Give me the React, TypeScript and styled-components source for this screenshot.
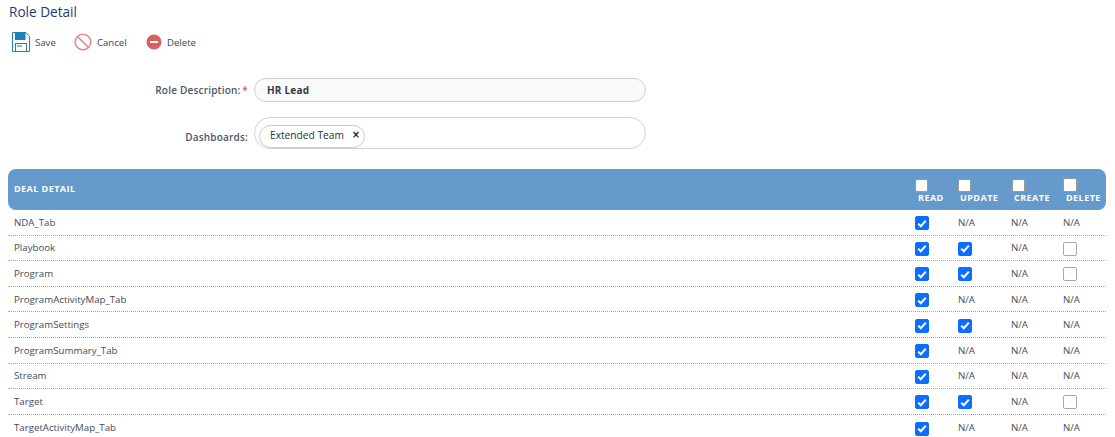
import React from 'react';
import styled, { createGlobalStyle } from 'styled-components';

const GlobalStyle = createGlobalStyle`
  html, body {
    margin: 0;
    padding: 0;
    background: #fff;
    font-family: "Open Sans", "Noto Sans", sans-serif;
  }
`;

const Page = styled.div`
  width: 1115px;
  height: 437px;
  overflow: hidden;
  padding: 3px 9px 0 8px;
  box-sizing: border-box;
`;

const Title = styled.h1`
  margin: 0 0 0 1px;
  font-size: 13.6px;
  line-height: 18px;
  font-weight: 400;
  color: #1c3a78;
`;

const Toolbar = styled.div`
  display: flex;
  align-items: center;
  height: 24px;
  margin: 9px 0 0 4px;
`;

const ToolButton = styled.div<{ $width: number }>`
  display: flex;
  align-items: center;
  gap: 5px;
  width: ${({ $width }) => $width}px;
  font-size: 9.6px;
  color: #2f4a66;
`;

const Form = styled.div`
  display: flex;
  flex-direction: column;
  margin-top: 24px;
`;

const FormRow = styled.div<{ $top: number }>`
  display: flex;
  align-items: center;
  margin-top: ${({ $top }) => $top}px;
`;

const Label = styled.label<{ $drop?: number }>`
  width: 240px;
  margin-right: 6px;
  padding-top: ${({ $drop }) => $drop ?? 0}px;
  text-align: right;
  font-size: 10px;
  font-weight: 600;
  letter-spacing: 0.2px;
  color: #4a5568;
`;

const Required = styled.span`
  margin-left: -1px;
  color: #e0545c;
`;

const TextInput = styled.div`
  width: 392px;
  height: 24px;
  box-sizing: border-box;
  padding-left: 12px;
  display: flex;
  align-items: center;
  border: 1px solid #cdcdd8;
  border-radius: 12px;
  background: #fafafa;
  font-size: 10px;
  font-weight: 700;
  letter-spacing: 0.2px;
  color: #333b4a;
`;

const TagInput = styled.div`
  width: 392px;
  height: 32px;
  box-sizing: border-box;
  padding: 4px;
  border: 1px solid #d2d2d8;
  border-radius: 16px;
  background: #fff;
`;

const Tag = styled.span`
  display: inline-flex;
  align-items: center;
  gap: 8px;
  height: 23px;
  box-sizing: border-box;
  padding: 0 4px 2px 10px;
  border: 1px solid #c9c9cf;
  border-radius: 12px;
  font-size: 10.2px;
  color: #2a2f3a;
`;

const TagClose = styled.span`
  margin-top: -2px;
  font-size: 10px;
  font-weight: 700;
  font-family: "DejaVu Sans", sans-serif;
  color: #222;
`;

const Table = styled.div`
  margin-top: 20px;
  width: 1098px;
`;

const grid = `
  display: grid;
  grid-template-columns: 907px 43px 53px 52px 43px;
`;

const HeaderRow = styled.div`
  ${grid}
  height: 41px;
  align-items: center;
  background: #6699cc;
  border-radius: 8px;
  color: #fff;
  font-size: 9px;
  font-weight: 700;
  letter-spacing: 0.45px;
`;

const HeaderTitle = styled.div`
  padding-left: 6px;
  margin-top: -3px;
`;

const HeaderCell = styled.div`
  display: flex;
  flex-direction: column;
  align-items: flex-start;
  align-self: start;
  padding-top: 10px;
  line-height: 10px;
`;

const HeaderBox = styled.span<{ $indent: number; $size: number }>`
  display: block;
  width: ${({ $size }) => $size}px;
  height: ${({ $size }) => $size}px;
  margin-left: ${({ $indent }) => $indent}px;
  margin-top: ${({ $size }) => 13 - $size}px;
  background: #fff;
  border: 1px solid #9a9a9a;
  border-radius: 2px;
  box-sizing: border-box;
`;

const HeaderText = styled.span<{ $indent: number }>`
  margin-top: 1px;
  margin-left: ${({ $indent }) => $indent}px;
`;

const Row = styled.div`
  ${grid}
  height: 25.6px;
  box-sizing: border-box;
  align-items: center;
  border-bottom: 1px dotted #a8a8a8;
  font-size: 9.7px;
  color: #444c58;
  &:last-child {
    border-bottom: none;
  }
`;

const RowName = styled.div`
  padding-left: 6px;
`;

const Cell = styled.div`
  display: flex;
  align-items: center;
`;

const Box = styled.span<{ $checked: boolean }>`
  display: flex;
  align-items: center;
  justify-content: center;
  width: 14px;
  height: 14px;
  margin-top: 2px;
  box-sizing: border-box;
  border-radius: 2px;
  border: 1px solid ${({ $checked }) => ($checked ? '#0d6efd' : '#a9a9a9')};
  background: ${({ $checked }) => ($checked ? '#0d6efd' : '#fff')};
`;

const SaveIcon = () => (
  <svg width="18" height="20" viewBox="0 0 18 20" fill="none">
    <path d="M.5.5h13.5l3.5 4v15H.5z" fill="#fff" stroke="#1f7fb8" />
    <rect x="3" y="1" width="10.5" height="7" fill="#1f7fb8" />
    <rect x="3.5" y="11.5" width="11" height="8" fill="#fff" stroke="#1f7fb8" />
    <rect x="5" y="13" width="5" height="2" fill="#8fb8d4" />
  </svg>
);

const CancelIcon = () => (
  <svg width="18" height="18" viewBox="0 0 18 18" fill="none">
    <circle cx="9" cy="9" r="7.8" stroke="#e08a8a" strokeWidth="1.6" />
    <path d="M3.5 3.5l11 11" stroke="#e08a8a" strokeWidth="1.6" />
  </svg>
);

const DeleteIcon = () => (
  <svg width="16" height="16" viewBox="0 0 16 16">
    <circle cx="8" cy="8" r="7.5" fill="#d9605f" />
    <rect x="4" y="7" width="8" height="2" fill="#fff" />
  </svg>
);

const CheckBox = ({ checked }: { checked: boolean }) => (
  <Box $checked={checked}>
    {checked && (
      <svg width="10" height="9" viewBox="0 0 10 9" fill="none">
        <path d="M1.2 4.6l2.6 2.6 5-5.6" stroke="#fff" strokeWidth="2" />
      </svg>
    )}
  </Box>
);

type Perm = 'on' | 'off' | 'na';

const rows: { name: string; perms: Perm[] }[] = [
  { name: 'NDA_Tab', perms: ['on', 'na', 'na', 'na'] },
  { name: 'Playbook', perms: ['on', 'on', 'na', 'off'] },
  { name: 'Program', perms: ['on', 'on', 'na', 'off'] },
  { name: 'ProgramActivityMap_Tab', perms: ['on', 'na', 'na', 'na'] },
  { name: 'ProgramSettings', perms: ['on', 'on', 'na', 'na'] },
  { name: 'ProgramSummary_Tab', perms: ['on', 'na', 'na', 'na'] },
  { name: 'Stream', perms: ['on', 'na', 'na', 'na'] },
  { name: 'Target', perms: ['on', 'on', 'na', 'off'] },
  { name: 'TargetActivityMap_Tab', perms: ['on', 'na', 'na', 'na'] },
];

const columns = [
  { name: 'READ', box: 0, text: 3, size: 13 },
  { name: 'UPDATE', box: 0, text: 2, size: 13 },
  { name: 'CREATE', box: 1, text: 3, size: 13 },
  { name: 'DELETE', box: 0, text: 3, size: 14 },
];

export default function App(): JSX.Element {
  return (
    <Page>
      <GlobalStyle />
      <Title>Role Detail</Title>
      <Toolbar>
        <ToolButton $width={62}>
          <SaveIcon />
          Save
        </ToolButton>
        <ToolButton $width={72}>
          <CancelIcon />
          Cancel
        </ToolButton>
        <ToolButton $width={60}>
          <DeleteIcon />
          Delete
        </ToolButton>
      </Toolbar>
      <Form>
        <FormRow $top={0}>
          <Label>
            Role Description: <Required>*</Required>
          </Label>
          <TextInput>HR Lead</TextInput>
        </FormRow>
        <FormRow $top={15}>
          <Label $drop={7}>Dashboards:</Label>
          <TagInput>
            <Tag>
              Extended Team
              <TagClose>×</TagClose>
            </Tag>
          </TagInput>
        </FormRow>
      </Form>
      <Table>
        <HeaderRow>
          <HeaderTitle>DEAL DETAIL</HeaderTitle>
          {columns.map(col => (
            <HeaderCell key={col.name}>
              <HeaderBox $indent={col.box} $size={col.size} />
              <HeaderText $indent={col.text}>{col.name}</HeaderText>
            </HeaderCell>
          ))}
        </HeaderRow>
        {rows.map(row => (
          <Row key={row.name}>
            <RowName>{row.name}</RowName>
            {row.perms.map((perm, i) => (
              <Cell key={columns[i].name}>
                {perm === 'na' ? 'N/A' : <CheckBox checked={perm === 'on'} />}
              </Cell>
            ))}
          </Row>
        ))}
      </Table>
    </Page>
  );
}
